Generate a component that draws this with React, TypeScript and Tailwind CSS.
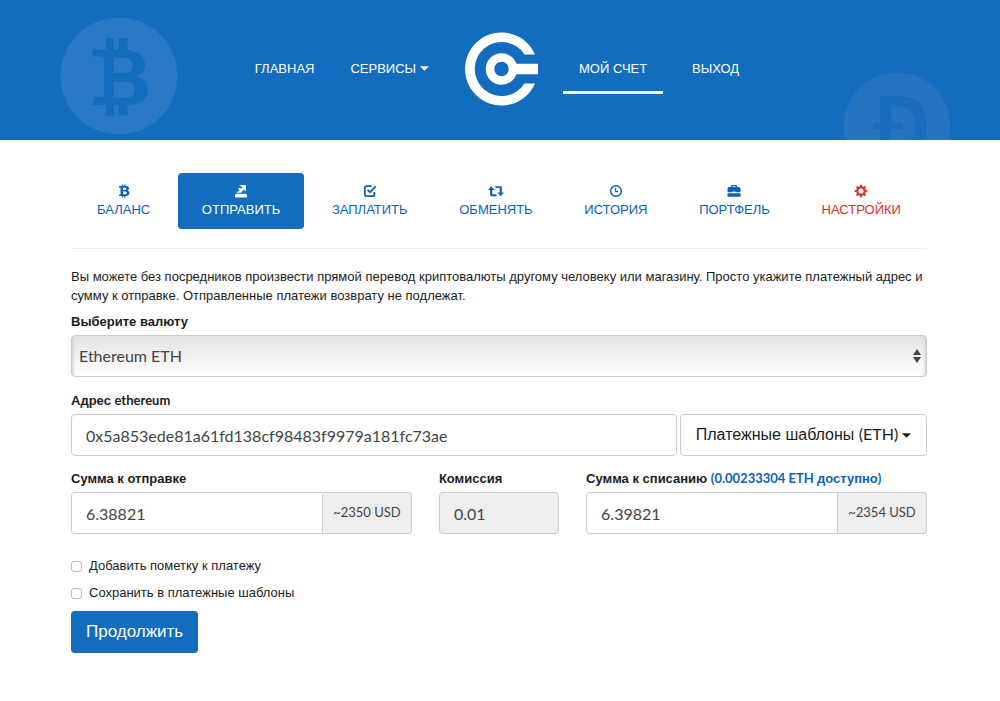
import React, { useState } from 'react';

type TabProps = {
  label: string;
  icon: React.ReactNode;
  active?: boolean;
  danger?: boolean;
};

const BitcoinIcon = () => (
  <svg viewBox="0 0 14 14" className="h-3.5 w-3.5" fill="currentColor" fillRule="evenodd">
    <path d="M2 2h2.8V.5h1.4V2h1V.5h1.4V2C11 2.2 12 3.2 12 4.5c0 1-.6 1.800-1.500 2.200 1.300.300 2 1.200 2 2.400 0 1.700-1.300 2.800-3.900 2.900v1.500H7.200V12h-1v1.500H4.800V12H2l.3-1.600h1.200V3.600H2zM6 3.700v2.400h1.700c1.100 0 1.600-.5 1.600-1.200S8.800 3.700 7.700 3.700zM6 7.600v2.700h2c1.200 0 1.800-.5 1.800-1.300S9.200 7.600 8 7.600z" />
  </svg>
);

const SendIcon = () => (
  <svg viewBox="0 0 14 14" className="h-3.5 w-3.5" fill="currentColor">
    <path d="M5 1h7v6.500L10 5.500 7 8.700H2.500L5.500 6 4 4.500l1.500-.7 1.500 1 1.500-1.500z" />
    <path d="M2 9.700h10l1 1.300v2.500H1V11z" />
  </svg>
);

const CheckIcon = () => (
  <svg viewBox="0 0 14 14" className="h-3.5 w-3.5" fill="none" stroke="currentColor" strokeWidth="1.800">
    <path d="M8.500 2.200H3.500A1.700 1.700 0 0 0 1.800 3.900v6.600a1.700 1.700 0 0 0 1.700 1.700h6.200a1.700 1.700 0 0 0 1.700-1.700V8" />
    <path d="M4.600 5.800l2.400 2.400 5.700-5.900" />
  </svg>
);

const ExchangeIcon = () => (
  <svg viewBox="0 0 18 14" className="h-3.5 w-[18px]" fill="currentColor">
    <path d="M4.300 2.200l3.300 3.800H5.300v4.300h3.500l1.600 1.900H4.300c-.7 0-1.200-.4-1.200-1.100V6H1z" />
    <path d="M13.700 12.200L10.400 8.400h2.300V4.100H9.200L7.600 2.200h6.100c.7 0 1.200.4 1.200 1.100v5.100H17z" />
  </svg>
);

const HistoryIcon = () => (
  <svg viewBox="0 0 14 14" className="h-3.5 w-3.5" fill="none" stroke="currentColor">
    <circle cx="7" cy="7" r="5.300" strokeWidth="1.500" />
    <path d="M6.500 3.800v3.700h2.500" strokeWidth="1.300" />
  </svg>
);

const BriefcaseIcon = () => (
  <svg viewBox="0 0 14 14" className="h-3.5 w-3.5" fill="currentColor" fillRule="evenodd">
    <path d="M4 3V2.200C4 1.500 4.500 1 5.200 1h3.600c.7 0 1.200.5 1.200 1.200V3h2.500l1 1.500v3.800H8.500V7.500h-3v.8H.5V4.500L1.500 3zM5.400 3h3.200v-.8H5.400zM.5 9.300h13v3.500H.5z" />
  </svg>
);

const GearIcon = () => (
  <svg viewBox="0 0 14 14" className="h-3.5 w-3.5" fill="none" stroke="currentColor">
    <circle cx="7" cy="7" r="3.700" strokeWidth="2.200" />
    <path
      d="M7 .8v2M7 11.200v2M.8 7h2M11.200 7h2M2.600 2.600L4 4M10 10l1.400 1.400M2.600 11.400L4 10M10 4l1.400-1.400"
      strokeWidth="2.200"
    />
  </svg>
);

const Caret = () => (
  <svg viewBox="0 0 10 5" className="h-[5px] w-[9px] shrink-0" fill="currentColor">
    <path d="M0 0h10L5 5z" />
  </svg>
);

const Logo = () => (
  <svg viewBox="0 0 74 74" className="h-[74px] w-[74px]" fill="none" stroke="#fff">
    <path
      d="M70 22.500A36.500 36.500 0 1 0 70 51.500H59.500A27 27 0 1 1 59.500 22.500z"
      fill="#fff"
      stroke="none"
    />
    <circle cx="36.500" cy="37" r="11.500" strokeWidth="8.500" />
    <path d="M49 37h24" strokeWidth="10.500" />
  </svg>
);

const BitcoinCoin = () => (
  <svg viewBox="0 0 118 118" className="absolute top-[17px] left-[60px] h-[118px] w-[118px]">
    <circle cx="59" cy="59" r="58.500" fill="#2a79c4" />
    <path
      fill="#136dbd"
      fillRule="evenodd"
      d="M32.500 32.500H46V21h8v11.500h5V21h8.500v12C79 34 85 40 85 47.500c0 6-3.500 10-9 12 7.500 2 12 6.500 12 13.500 0 9-7 14.500-20.500 15v10.500H59V88h-5v10.500h-8V88H32.500l1.500-8h7c2 0 3-.8 3-3V43c0-2.300-1-3.500-3.500-3.500h-8zM53.500 41v15H64c5.500 0 8.500-3 8.500-7.700C72.500 43.500 69.500 41 64 41zM53.500 64.500v16H66c6 0 9-3 9-8s-3-8-9-8z"
    />
  </svg>
);

const DogeCoin = () => (
  <svg viewBox="0 0 108 108" className="absolute top-[72px] right-[49px] h-[108px] w-[108px]">
    <circle cx="54" cy="54" r="53.500" fill="#2673c0" />
    <path
      fill="#176cbb"
      fillRule="evenodd"
      d="M37 24h19c18 0 28 11 28 29S74 84 56 84H37V57h-7v-6h7zM48 35v16h12v6H48v16h8c11 0 16-7 16-19s-5-19-16-19z"
    />
  </svg>
);

const Tab: React.FC<TabProps> = ({ label, icon, active, danger }) => {
  const color = active
    ? 'bg-[#126dbe] text-white'
    : danger
      ? 'text-[#d9302c]'
      : 'text-[#0a62b9]';

  return (
    <a
      href="#"
      className={`flex h-14 flex-col items-center gap-0.5 rounded px-6 pt-[11px] text-[13px] leading-5 ${color}`}
    >
      {icon}
      <span>{label}</span>
    </a>
  );
};

const Lato: React.FC<{ children: React.ReactNode }> = ({ children }) => (
  <span className="font-['Lato',sans-serif] leading-none">{children}</span>
);

const labelStyle = 'block text-[13px] leading-[18px] font-bold';
const fieldStyle =
  "h-[42px] w-full min-w-0 border border-[#ccc] px-3.5 font-['Lato',sans-serif] text-base text-[#444] outline-none";
const addonStyle =
  "flex w-[89px] shrink-0 items-center justify-center rounded-r border border-l-0 border-[#ccc] bg-[#eee] font-['Lato',sans-serif] text-[13px] text-[#444]";
const checkboxStyle =
  'h-[11px] w-[11px] appearance-none rounded-[3px] border border-[#bbb] checked:bg-[#126dbe]';

const App: React.FC = () => {
  const [address, setAddress] = useState('0x5a853ede81a61fd138cf98483f9979a181fc73ae');
  const [amount, setAmount] = useState('6.38821');
  const [total, setTotal] = useState('6.39821');

  return (
    <div className="min-h-screen bg-white font-['Liberation_Sans',Arial,sans-serif] text-[13px] text-[#1c1c1c]">
      <header className="relative h-[140px] overflow-hidden bg-[#126dbe] text-white">
        <BitcoinCoin />
        <DogeCoin />
        <nav className="relative flex h-[137px] items-center justify-center pr-1.5">
          <a href="#">ГЛАВНАЯ</a>
          <a href="#" className="ml-9 flex items-center gap-1">
            СЕРВИСЫ
            <Caret />
          </a>
          <a href="#" aria-label="На главную" className="ml-9">
            <Logo />
          </a>
          <a
            href="#"
            className="ml-6 flex h-[50px] w-[100px] items-center justify-center border-y-3 border-t-transparent border-b-white"
          >
            МОЙ СЧЕТ
          </a>
          <a href="#" className="ml-[29px]">ВЫХОД</a>
        </nav>
      </header>

      <main className="pt-[33px] pr-[73px] pl-[71px]">
        <nav className="flex justify-between border-b border-[#eee] px-0.5 pb-[19px]">
          <Tab label="БАЛАНС" icon={<BitcoinIcon />} />
          <Tab label="ОТПРАВИТЬ" icon={<SendIcon />} active />
          <Tab label="ЗАПЛАТИТЬ" icon={<CheckIcon />} />
          <Tab label="ОБМЕНЯТЬ" icon={<ExchangeIcon />} />
          <Tab label="ИСТОРИЯ" icon={<HistoryIcon />} />
          <Tab label="ПОРТФЕЛЬ" icon={<BriefcaseIcon />} />
          <Tab label="НАСТРОЙКИ" icon={<GearIcon />} danger />
        </nav>

        <form onSubmit={(e) => e.preventDefault()}>
          <p className="mt-[18px] leading-[19px]">
            Вы можете без посредников произвести прямой перевод криптовалюты другому человеку или магазину. Просто укажите платежный адрес и сумму к отправке. Отправленные платежи возврату не подлежат.
          </p>

          <label htmlFor="currency" className={`mt-2 ${labelStyle}`}>Выберите валюту</label>
          <div className="relative mt-1">
            <select
              id="currency"
              className="h-[42px] w-full appearance-none rounded border border-[#ccc] bg-linear-to-b from-[#e3e3e3] to-white px-[7px] font-['Lato',sans-serif] text-base text-[#444] shadow-[inset_3px_0_3px_-2px_#ccc,inset_-3px_0_3px_-2px_#ccc] outline-none"
            >
              <option>Ethereum ETH</option>
            </select>
            <svg
              viewBox="0 0 8 16"
              className="pointer-events-none absolute top-[13px] right-1.5 h-4 w-2"
              fill="#444"
            >
              <path d="M0 7h8L4 1zM0 9h8l-4 6z" />
            </svg>
          </div>

          <label htmlFor="address" className={`mt-[15px] ${labelStyle}`}>
            Адрес <Lato>ethereum</Lato>
          </label>
          <div className="mt-1 flex gap-[3px]">
            <input
              id="address"
              value={address}
              onChange={(e) => setAddress(e.target.value)}
              className={`rounded ${fieldStyle}`}
            />
            <button
              type="button"
              className="flex w-[247px] shrink-0 items-center justify-center gap-1 rounded border border-[#ccc] text-base whitespace-nowrap"
            >
              <span>
                Платежные шаблоны <Lato>(ETH)</Lato>
              </span>
              <Caret />
            </button>
          </div>

          <div className="mt-3.5 grid grid-cols-12 gap-x-[27px]">
            <div className="col-span-5">
              <label htmlFor="amount" className={labelStyle}>Сумма к отправке</label>
              <div className="mt-1 flex">
                <input
                  id="amount"
                  value={amount}
                  onChange={(e) => setAmount(e.target.value)}
                  className={`rounded-l ${fieldStyle}`}
                />
                <span className={addonStyle}>~2350 USD</span>
              </div>
            </div>
            <div className="col-span-2">
              <label htmlFor="fee" className={labelStyle}>Комиссия</label>
              <input id="fee" value="0.01" readOnly className={`mt-1 rounded bg-[#eee] ${fieldStyle}`} />
            </div>
            <div className="col-span-5">
              <label htmlFor="total" className={labelStyle}>
                Сумма к списанию{' '}
                <a href="#" className="text-[#0a62b9]">
                  <Lato>(0.00233304 ETH </Lato>доступно<Lato>)</Lato>
                </a>
              </label>
              <div className="mt-1 flex">
                <input
                  id="total"
                  value={total}
                  onChange={(e) => setTotal(e.target.value)}
                  className={`rounded-l ${fieldStyle}`}
                />
                <span className={addonStyle}>~2354 USD</span>
              </div>
            </div>
          </div>

          <div className="mt-[23px] flex flex-col items-start gap-[9px] leading-[18px]">
            <label className="flex items-center gap-[7px]">
              <input type="checkbox" className={checkboxStyle} />
              Добавить пометку к платежу
            </label>
            <label className="flex items-center gap-[7px]">
              <input type="checkbox" className={checkboxStyle} />
              Сохранить в платежные шаблоны
            </label>
            <button type="submit" className="h-[42px] rounded bg-[#126dbe] px-[15px] text-[17px] text-white">
              Продолжить
            </button>
          </div>
        </form>
      </main>
    </div>
  );
};

export default App;
